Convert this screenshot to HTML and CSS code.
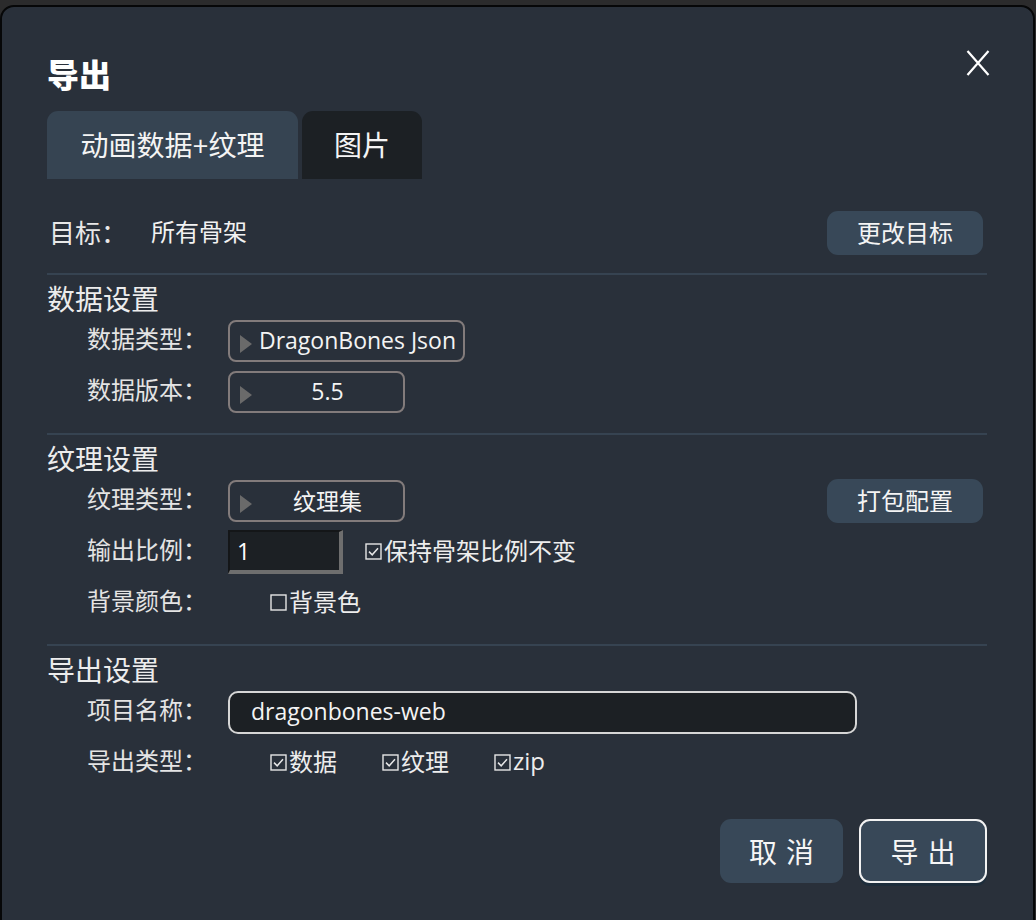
FILE: index.html
```html
<!DOCTYPE html>
<html lang="zh-CN">
<head>
<meta charset="utf-8">
<title>导出</title>
<link rel="stylesheet" href="styles.css">
</head>
<body>
<div class="dialog">
  <div class="header">
    <h1 class="title">导出</h1>
    <button class="close" aria-label="关闭">
      <svg width="24" height="26" viewBox="0 0 24 26"><path d="M1.5 1 L22.5 25 M22.5 1 L1.5 25" stroke="#ffffff" stroke-width="2.2" fill="none"/></svg>
    </button>
  </div>

  <div class="tabs">
    <div class="tab active">动画数据+纹理</div>
    <div class="tab">图片</div>
  </div>

  <div class="target-row">
    <span class="target-label">目标：</span>
    <span class="target-value">所有骨架</span>
    <button class="btn-small">更改目标</button>
  </div>

  <section class="section">
    <h2 class="section-title">数据设置</h2>
    <div class="rows">
      <div class="row">
        <span class="label">数据类型：</span>
        <div class="select wide"><i class="tri"></i><span class="select-text">DragonBones Json</span></div>
      </div>
      <div class="row">
        <span class="label">数据版本：</span>
        <div class="select"><i class="tri"></i><span class="select-text">5.5</span></div>
      </div>
    </div>
  </section>

  <section class="section">
    <h2 class="section-title">纹理设置</h2>
    <div class="rows">
      <div class="row">
        <span class="label">纹理类型：</span>
        <div class="select"><i class="tri"></i><span class="select-text">纹理集</span></div>
        <button class="btn-small">打包配置</button>
      </div>
      <div class="row">
        <span class="label">输出比例：</span>
        <div class="num-input">1</div>
        <label class="check keep"><svg class="box" width="17" height="17" viewBox="0 0 17 17"><rect x="1" y="1" width="15" height="15" fill="none" stroke="#e6e6e6" stroke-width="1.4"/><path d="M4 8.6 L7.2 11.8 L13 5.2" fill="none" stroke="#e6e6e6" stroke-width="1.5"/></svg>保持骨架比例不变</label>
      </div>
      <div class="row">
        <span class="label">背景颜色：</span>
        <label class="check indent"><svg class="box" width="17" height="17" viewBox="0 0 17 17"><rect x="1" y="1" width="15" height="15" fill="none" stroke="#e6e6e6" stroke-width="1.4"/></svg>背景色</label>
      </div>
    </div>
  </section>

  <section class="section">
    <h2 class="section-title">导出设置</h2>
    <div class="rows">
      <div class="row">
        <span class="label">项目名称：</span>
        <div class="text-input">dragonbones-web</div>
      </div>
      <div class="row">
        <span class="label">导出类型：</span>
        <div class="checks">
          <label class="check item"><svg class="box" width="17" height="17" viewBox="0 0 17 17"><rect x="1" y="1" width="15" height="15" fill="none" stroke="#e6e6e6" stroke-width="1.4"/><path d="M4 8.6 L7.2 11.8 L13 5.2" fill="none" stroke="#e6e6e6" stroke-width="1.5"/></svg>数据</label>
          <label class="check item"><svg class="box" width="17" height="17" viewBox="0 0 17 17"><rect x="1" y="1" width="15" height="15" fill="none" stroke="#e6e6e6" stroke-width="1.4"/><path d="M4 8.6 L7.2 11.8 L13 5.2" fill="none" stroke="#e6e6e6" stroke-width="1.5"/></svg>纹理</label>
          <label class="check item"><svg class="box" width="17" height="17" viewBox="0 0 17 17"><rect x="1" y="1" width="15" height="15" fill="none" stroke="#e6e6e6" stroke-width="1.4"/><path d="M4 8.6 L7.2 11.8 L13 5.2" fill="none" stroke="#e6e6e6" stroke-width="1.5"/></svg>zip</label>
        </div>
      </div>
    </div>
  </section>

  <div class="footer">
    <button class="btn-big">取消</button>
    <button class="btn-big primary">导出</button>
  </div>
</div>
</body>
</html>
```

FILE: styles.css
```css
* {
  box-sizing: border-box;
}

html, body {
  margin: 0;
  padding: 0;
  height: 100%;
  overflow: hidden;
}

body {
  background: #2b2b2c;
  font-family: "Open Sans", "Noto Sans CJK SC", sans-serif;
  color: #ececec;
}

.dialog {
  margin-top: 5px;
  width: 1035px;
  height: 940px;
  background: #29303a;
  border: 2px solid #060708;
  border-radius: 14px;
  padding: 48px 46px 0 45px;
}

.header {
  display: flex;
  justify-content: space-between;
  align-items: flex-start;
  height: 36px;
}

.title {
  margin: 0;
  font-family: "Noto Sans CJK SC", sans-serif;
  font-size: 32px;
  font-weight: 900;
  line-height: 36px;
  color: #ffffff;
}

.close {
  background: none;
  border: none;
  padding: 0;
  margin: -5px -3px 0 0;
  width: 24px;
  height: 26px;
  display: block;
  cursor: pointer;
}

.close svg {
  display: block;
}

.tabs {
  display: flex;
  gap: 4px;
  margin-top: 20px;
}

.tab {
  height: 68px;
  width: 120px;
  display: flex;
  align-items: center;
  justify-content: center;
  border-radius: 11px 11px 0 0;
  background: #1c2024;
  font-size: 28px;
  color: #f4f4f4;
  padding-bottom: 2px;
}

.tab.active {
  width: 251px;
  background: #364452;
}

.target-row {
  display: flex;
  align-items: center;
  height: 44px;
  margin-top: 32px;
}

.target-label {
  width: 104px;
  padding-left: 2px;
  font-size: 26px;
  color: #e8e8e8;
  padding-bottom: 2px;
}

.target-value {
  font-size: 24px;
  color: #f2f2f2;
  padding-bottom: 6px;
}

.btn-small {
  margin-left: auto;
  margin-right: 4px;
  width: 156px;
  height: 44px;
  border: none;
  border-radius: 11px;
  background: #384858;
  color: #f4f4f4;
  font-family: "Noto Sans CJK SC", sans-serif;
  font-size: 24px;
  line-height: 40px;
  padding: 0 0 3px;
}

.section {
  border-top: 2px solid #364351;
  margin-top: 18px;
  padding-bottom: 20px;
}

.section + .section {
  margin-top: 0;
}

.section-title {
  margin: 8px 0 5px;
  font-size: 28px;
  font-weight: 400;
  line-height: 32px;
  color: #ececec;
}

.rows {
  display: flex;
  flex-direction: column;
  gap: 9px;
}

.row {
  display: flex;
  align-items: center;
  height: 42px;
  padding-left: 40px;
}

.label {
  width: 141px;
  font-size: 24px;
  color: #e4e4e4;
  padding-bottom: 7px;
}

.select {
  width: 177px;
  height: 42px;
  border: 2px solid #827b7b;
  border-radius: 8px;
  display: flex;
  align-items: center;
  padding-left: 10px;
}

.select.wide {
  width: 237px;
}

.tri {
  display: block;
  flex: none;
  width: 0;
  height: 0;
  border-left: 12px solid #6a6a6a;
  border-top: 9px solid transparent;
  border-bottom: 9px solid transparent;
  margin-top: 6px;
}

.select-text {
  flex: 1;
  text-align: center;
  font-size: 23px;
  color: #f4f4f4;
  padding-bottom: 3px;
}

.num-input {
  width: 115px;
  height: 44px;
  background: #1c2024;
  border-style: solid;
  border-width: 2px 4px 4px 2px;
  border-color: #141618 #6e6e6e #6e6e6e #141618;
  font-size: 23px;
  line-height: 38px;
  padding-left: 7px;
  color: #ffffff;
}

.check {
  display: flex;
  align-items: center;
  font-size: 24px;
  color: #ededed;
  padding-bottom: 5px;
}

.check .box {
  display: block;
  margin: 3px 2px 0 0;
  flex: none;
}

.check.keep {
  margin-left: 22px;
}

.check.indent {
  margin-left: 42px;
}

.checks {
  display: flex;
  margin-left: 42px;
}

.check.item {
  width: 112px;
}

.check.item:last-child {
  width: auto;
}

.text-input {
  width: 629px;
  height: 43px;
  border: 2px solid #d6d6d6;
  border-radius: 10px;
  background: #1c2024;
  font-size: 23px;
  line-height: 36px;
  padding-left: 21px;
  color: #f4f4f4;
}

.footer {
  display: flex;
  justify-content: flex-end;
  gap: 16px;
  margin-top: 15px;
}

.btn-big {
  width: 123px;
  height: 64px;
  border: none;
  border-radius: 11px;
  background: #384858;
  color: #f6f6f6;
  font-family: "Noto Sans CJK SC", sans-serif;
  font-size: 28px;
  letter-spacing: 9px;
  padding: 0 0 0 9px;
}

.btn-big.primary {
  width: 128px;
  border: 2px solid #f2f2f2;
  box-shadow: 0 3px 0 #1d2d3b;
}
```
